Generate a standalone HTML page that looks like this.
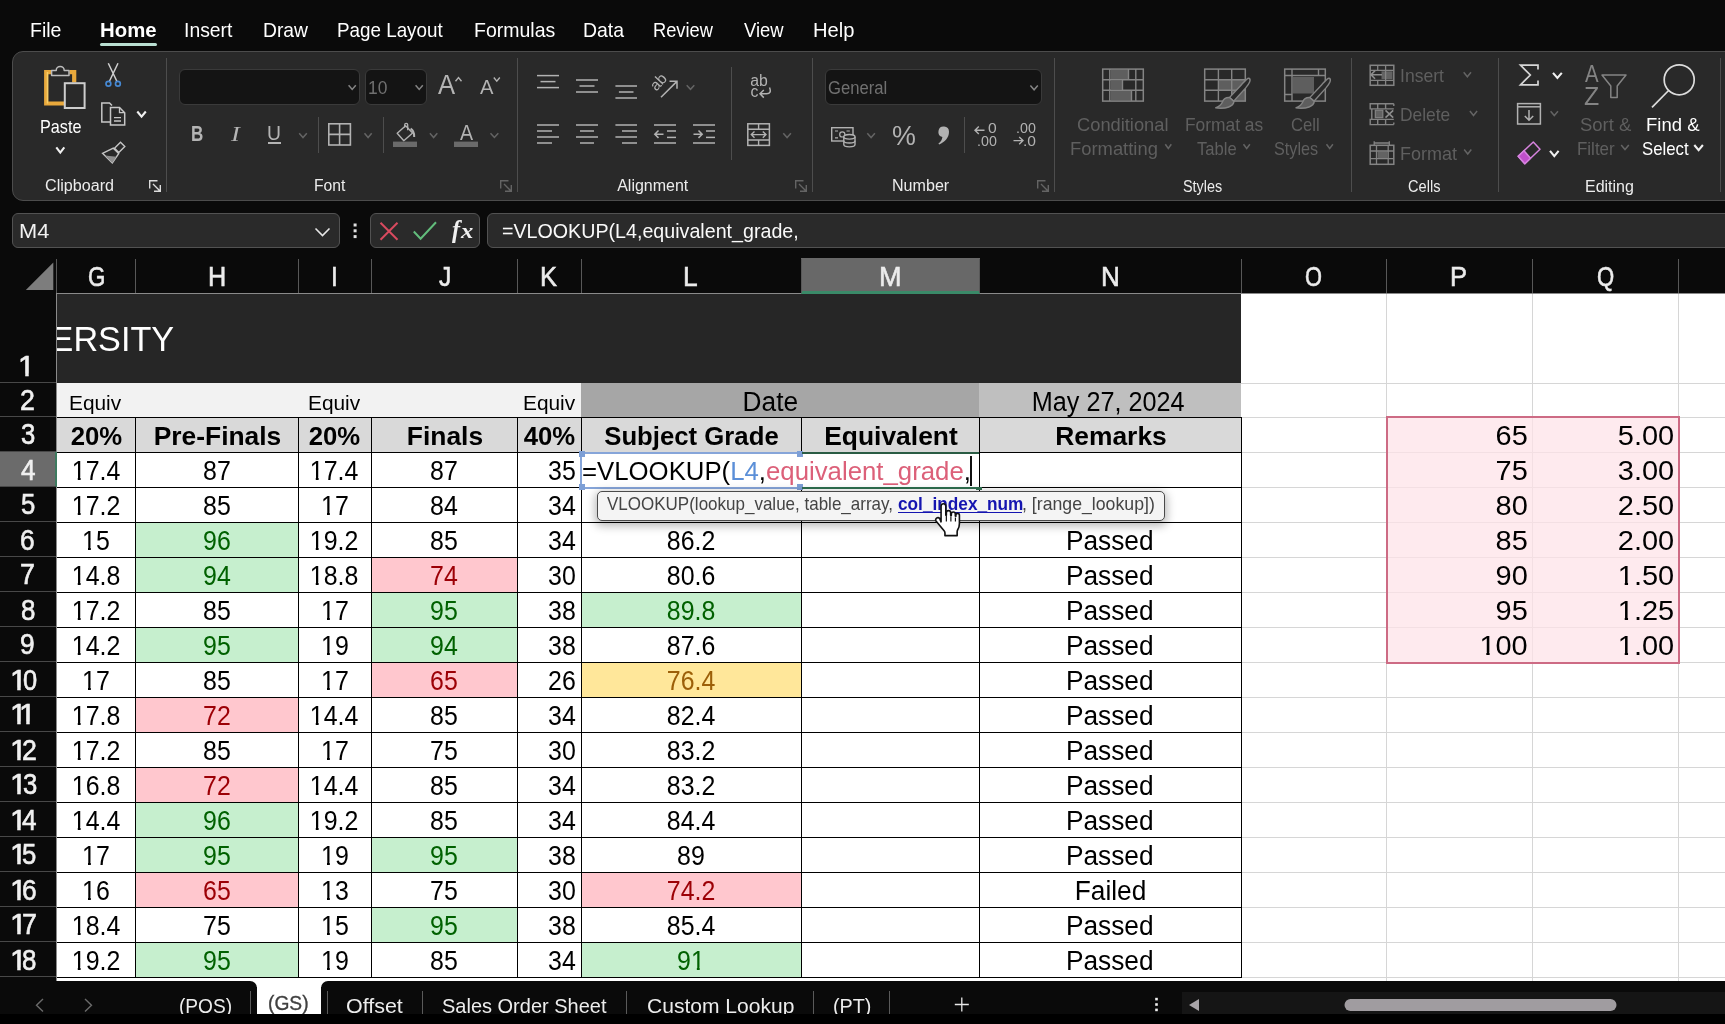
<!DOCTYPE html><html><head><meta charset="utf-8"><title>Excel</title><style>
*{margin:0;padding:0;box-sizing:border-box}
html,body{width:1725px;height:1024px;overflow:hidden;background:#0a0a0a;font-family:"Liberation Sans",sans-serif}
#root{will-change:transform;position:absolute;left:0;top:0;width:1725px;height:1024px;overflow:hidden;background:#0a0a0a}
.t{position:absolute;white-space:pre;line-height:1;transform-origin:0 0;display:block}
.a{position:absolute}
.c{position:absolute;font-size:26.8px;line-height:39.2px;height:35px;text-align:center;white-space:pre;color:#000;overflow:hidden}
.r{text-align:right}
.c span{display:inline-block}
.n{transform:scaleX(.93)}
.w{transform:scaleX(.98)}
.r .n{transform-origin:100% 50%}
.q{transform:scaleX(1.08);transform-origin:100% 50%}
.hb{font-weight:bold;font-size:26.4px}
.g{background:#c6efce;color:#006100}
.p{background:#ffc7ce;color:#9c0006}
.y{background:#ffe79a;color:#9c5f08}
.hl{position:absolute;background:#000;height:1px}
.vl{position:absolute;background:#000;width:1px}
svg{position:absolute;left:0;top:0;overflow:visible}
.o{display:inline-block;line-height:30px;clip-path:polygon(0 0,15.90px 0,15.90px 21.20px,9.46px 21.20px,9.46px 30px,6.39px 30px,6.39px 21.20px,0 21.20px)}
.o2{display:inline-block;line-height:32px;clip-path:polygon(0 0,16.91px 0,16.91px 23.06px,10.07px 23.06px,10.07px 32px,6.84px 32px,6.84px 23.06px,0 23.06px)}
</style></head><body><div id="root">
<div class="a" id="grid" style="left:0;top:258px;width:1725px;height:723px;overflow:hidden;background:#fff">
<div class="a" style="left:1241px;top:125px;width:500px;height:1px;background:#d6d6d6"></div>
<div class="a" style="left:1241px;top:159px;width:500px;height:1px;background:#d6d6d6"></div>
<div class="a" style="left:1241px;top:194px;width:500px;height:1px;background:#d6d6d6"></div>
<div class="a" style="left:1241px;top:229px;width:500px;height:1px;background:#d6d6d6"></div>
<div class="a" style="left:1241px;top:264px;width:500px;height:1px;background:#d6d6d6"></div>
<div class="a" style="left:1241px;top:299px;width:500px;height:1px;background:#d6d6d6"></div>
<div class="a" style="left:1241px;top:334px;width:500px;height:1px;background:#d6d6d6"></div>
<div class="a" style="left:1241px;top:369px;width:500px;height:1px;background:#d6d6d6"></div>
<div class="a" style="left:1241px;top:404px;width:500px;height:1px;background:#d6d6d6"></div>
<div class="a" style="left:1241px;top:439px;width:500px;height:1px;background:#d6d6d6"></div>
<div class="a" style="left:1241px;top:474px;width:500px;height:1px;background:#d6d6d6"></div>
<div class="a" style="left:1241px;top:509px;width:500px;height:1px;background:#d6d6d6"></div>
<div class="a" style="left:1241px;top:544px;width:500px;height:1px;background:#d6d6d6"></div>
<div class="a" style="left:1241px;top:579px;width:500px;height:1px;background:#d6d6d6"></div>
<div class="a" style="left:1241px;top:614px;width:500px;height:1px;background:#d6d6d6"></div>
<div class="a" style="left:1241px;top:649px;width:500px;height:1px;background:#d6d6d6"></div>
<div class="a" style="left:1241px;top:684px;width:500px;height:1px;background:#d6d6d6"></div>
<div class="a" style="left:1241px;top:719px;width:500px;height:1px;background:#d6d6d6"></div>
<div class="a" style="left:1386px;top:35px;width:1px;height:688px;background:#d6d6d6"></div>
<div class="a" style="left:1532px;top:35px;width:1px;height:688px;background:#d6d6d6"></div>
<div class="a" style="left:1678px;top:35px;width:1px;height:688px;background:#d6d6d6"></div>
<div class="a" style="left:57px;top:35px;width:1184px;height:90px;background:#262626"></div>
<div class="a" style="left:57px;top:125px;width:524px;height:34px;background:#f2f2f2"></div>
<div class="a" style="left:581px;top:125px;width:398px;height:34px;background:#a6a6a6"></div>
<div class="a" style="left:979px;top:125px;width:262px;height:34px;background:#bfbfbf"></div>
<div class="a" style="left:57px;top:159px;width:1184px;height:35px;background:#d9d9d9"></div>
<div class="a" style="left:1385.5px;top:158px;width:294.5px;height:247.5px;background:rgba(253,226,231,0.72);border:2px solid #cd6b84"></div>
<div class="c" style="left:57px;top:194px;width:78px"><span class="n"><span class="o">1</span>7.4</span></div>
<div class="c" style="left:135px;top:194px;width:163px"><span class="n">87</span></div>
<div class="c" style="left:298px;top:194px;width:73px"><span class="n"><span class="o">1</span>7.4</span></div>
<div class="c" style="left:371px;top:194px;width:146px"><span class="n">87</span></div>
<div class="c r" style="left:517px;top:194px;width:64px;padding-right:5px"><span class="n">35</span></div>
<div class="c" style="left:57px;top:229px;width:78px"><span class="n"><span class="o">1</span>7.2</span></div>
<div class="c" style="left:135px;top:229px;width:163px"><span class="n">85</span></div>
<div class="c" style="left:298px;top:229px;width:73px"><span class="n"><span class="o">1</span>7</span></div>
<div class="c" style="left:371px;top:229px;width:146px"><span class="n">84</span></div>
<div class="c r" style="left:517px;top:229px;width:64px;padding-right:5px"><span class="n">34</span></div>
<div class="c" style="left:57px;top:264px;width:78px"><span class="n"><span class="o">1</span>5</span></div>
<div class="c g" style="left:135px;top:264px;width:163px"><span class="n">96</span></div>
<div class="c" style="left:298px;top:264px;width:73px"><span class="n"><span class="o">1</span>9.2</span></div>
<div class="c" style="left:371px;top:264px;width:146px"><span class="n">85</span></div>
<div class="c r" style="left:517px;top:264px;width:64px;padding-right:5px"><span class="n">34</span></div>
<div class="c" style="left:581px;top:264px;width:220px"><span class="n">86.2</span></div>
<div class="c" style="left:979px;top:264px;width:262px"><span class="w">Passed</span></div>
<div class="c" style="left:57px;top:299px;width:78px"><span class="n"><span class="o">1</span>4.8</span></div>
<div class="c g" style="left:135px;top:299px;width:163px"><span class="n">94</span></div>
<div class="c" style="left:298px;top:299px;width:73px"><span class="n"><span class="o">1</span>8.8</span></div>
<div class="c p" style="left:371px;top:299px;width:146px"><span class="n">74</span></div>
<div class="c r" style="left:517px;top:299px;width:64px;padding-right:5px"><span class="n">30</span></div>
<div class="c" style="left:581px;top:299px;width:220px"><span class="n">80.6</span></div>
<div class="c" style="left:979px;top:299px;width:262px"><span class="w">Passed</span></div>
<div class="c" style="left:57px;top:334px;width:78px"><span class="n"><span class="o">1</span>7.2</span></div>
<div class="c" style="left:135px;top:334px;width:163px"><span class="n">85</span></div>
<div class="c" style="left:298px;top:334px;width:73px"><span class="n"><span class="o">1</span>7</span></div>
<div class="c g" style="left:371px;top:334px;width:146px"><span class="n">95</span></div>
<div class="c r" style="left:517px;top:334px;width:64px;padding-right:5px"><span class="n">38</span></div>
<div class="c g" style="left:581px;top:334px;width:220px"><span class="n">89.8</span></div>
<div class="c" style="left:979px;top:334px;width:262px"><span class="w">Passed</span></div>
<div class="c" style="left:57px;top:369px;width:78px"><span class="n"><span class="o">1</span>4.2</span></div>
<div class="c g" style="left:135px;top:369px;width:163px"><span class="n">95</span></div>
<div class="c" style="left:298px;top:369px;width:73px"><span class="n"><span class="o">1</span>9</span></div>
<div class="c g" style="left:371px;top:369px;width:146px"><span class="n">94</span></div>
<div class="c r" style="left:517px;top:369px;width:64px;padding-right:5px"><span class="n">38</span></div>
<div class="c" style="left:581px;top:369px;width:220px"><span class="n">87.6</span></div>
<div class="c" style="left:979px;top:369px;width:262px"><span class="w">Passed</span></div>
<div class="c" style="left:57px;top:404px;width:78px"><span class="n"><span class="o">1</span>7</span></div>
<div class="c" style="left:135px;top:404px;width:163px"><span class="n">85</span></div>
<div class="c" style="left:298px;top:404px;width:73px"><span class="n"><span class="o">1</span>7</span></div>
<div class="c p" style="left:371px;top:404px;width:146px"><span class="n">65</span></div>
<div class="c r" style="left:517px;top:404px;width:64px;padding-right:5px"><span class="n">26</span></div>
<div class="c y" style="left:581px;top:404px;width:220px"><span class="n">76.4</span></div>
<div class="c" style="left:979px;top:404px;width:262px"><span class="w">Passed</span></div>
<div class="c" style="left:57px;top:439px;width:78px"><span class="n"><span class="o">1</span>7.8</span></div>
<div class="c p" style="left:135px;top:439px;width:163px"><span class="n">72</span></div>
<div class="c" style="left:298px;top:439px;width:73px"><span class="n"><span class="o">1</span>4.4</span></div>
<div class="c" style="left:371px;top:439px;width:146px"><span class="n">85</span></div>
<div class="c r" style="left:517px;top:439px;width:64px;padding-right:5px"><span class="n">34</span></div>
<div class="c" style="left:581px;top:439px;width:220px"><span class="n">82.4</span></div>
<div class="c" style="left:979px;top:439px;width:262px"><span class="w">Passed</span></div>
<div class="c" style="left:57px;top:474px;width:78px"><span class="n"><span class="o">1</span>7.2</span></div>
<div class="c" style="left:135px;top:474px;width:163px"><span class="n">85</span></div>
<div class="c" style="left:298px;top:474px;width:73px"><span class="n"><span class="o">1</span>7</span></div>
<div class="c" style="left:371px;top:474px;width:146px"><span class="n">75</span></div>
<div class="c r" style="left:517px;top:474px;width:64px;padding-right:5px"><span class="n">30</span></div>
<div class="c" style="left:581px;top:474px;width:220px"><span class="n">83.2</span></div>
<div class="c" style="left:979px;top:474px;width:262px"><span class="w">Passed</span></div>
<div class="c" style="left:57px;top:509px;width:78px"><span class="n"><span class="o">1</span>6.8</span></div>
<div class="c p" style="left:135px;top:509px;width:163px"><span class="n">72</span></div>
<div class="c" style="left:298px;top:509px;width:73px"><span class="n"><span class="o">1</span>4.4</span></div>
<div class="c" style="left:371px;top:509px;width:146px"><span class="n">85</span></div>
<div class="c r" style="left:517px;top:509px;width:64px;padding-right:5px"><span class="n">34</span></div>
<div class="c" style="left:581px;top:509px;width:220px"><span class="n">83.2</span></div>
<div class="c" style="left:979px;top:509px;width:262px"><span class="w">Passed</span></div>
<div class="c" style="left:57px;top:544px;width:78px"><span class="n"><span class="o">1</span>4.4</span></div>
<div class="c g" style="left:135px;top:544px;width:163px"><span class="n">96</span></div>
<div class="c" style="left:298px;top:544px;width:73px"><span class="n"><span class="o">1</span>9.2</span></div>
<div class="c" style="left:371px;top:544px;width:146px"><span class="n">85</span></div>
<div class="c r" style="left:517px;top:544px;width:64px;padding-right:5px"><span class="n">34</span></div>
<div class="c" style="left:581px;top:544px;width:220px"><span class="n">84.4</span></div>
<div class="c" style="left:979px;top:544px;width:262px"><span class="w">Passed</span></div>
<div class="c" style="left:57px;top:579px;width:78px"><span class="n"><span class="o">1</span>7</span></div>
<div class="c g" style="left:135px;top:579px;width:163px"><span class="n">95</span></div>
<div class="c" style="left:298px;top:579px;width:73px"><span class="n"><span class="o">1</span>9</span></div>
<div class="c g" style="left:371px;top:579px;width:146px"><span class="n">95</span></div>
<div class="c r" style="left:517px;top:579px;width:64px;padding-right:5px"><span class="n">38</span></div>
<div class="c" style="left:581px;top:579px;width:220px"><span class="n">89</span></div>
<div class="c" style="left:979px;top:579px;width:262px"><span class="w">Passed</span></div>
<div class="c" style="left:57px;top:614px;width:78px"><span class="n"><span class="o">1</span>6</span></div>
<div class="c p" style="left:135px;top:614px;width:163px"><span class="n">65</span></div>
<div class="c" style="left:298px;top:614px;width:73px"><span class="n"><span class="o">1</span>3</span></div>
<div class="c" style="left:371px;top:614px;width:146px"><span class="n">75</span></div>
<div class="c r" style="left:517px;top:614px;width:64px;padding-right:5px"><span class="n">30</span></div>
<div class="c p" style="left:581px;top:614px;width:220px"><span class="n">74.2</span></div>
<div class="c" style="left:979px;top:614px;width:262px"><span class="w">Failed</span></div>
<div class="c" style="left:57px;top:649px;width:78px"><span class="n"><span class="o">1</span>8.4</span></div>
<div class="c" style="left:135px;top:649px;width:163px"><span class="n">75</span></div>
<div class="c" style="left:298px;top:649px;width:73px"><span class="n"><span class="o">1</span>5</span></div>
<div class="c g" style="left:371px;top:649px;width:146px"><span class="n">95</span></div>
<div class="c r" style="left:517px;top:649px;width:64px;padding-right:5px"><span class="n">38</span></div>
<div class="c" style="left:581px;top:649px;width:220px"><span class="n">85.4</span></div>
<div class="c" style="left:979px;top:649px;width:262px"><span class="w">Passed</span></div>
<div class="c" style="left:57px;top:684px;width:78px"><span class="n"><span class="o">1</span>9.2</span></div>
<div class="c g" style="left:135px;top:684px;width:163px"><span class="n">95</span></div>
<div class="c" style="left:298px;top:684px;width:73px"><span class="n"><span class="o">1</span>9</span></div>
<div class="c" style="left:371px;top:684px;width:146px"><span class="n">85</span></div>
<div class="c r" style="left:517px;top:684px;width:64px;padding-right:5px"><span class="n">34</span></div>
<div class="c g" style="left:581px;top:684px;width:220px"><span class="n">9<span class="o">1</span></span></div>
<div class="c" style="left:979px;top:684px;width:262px"><span class="w">Passed</span></div>
<div class="c" style="left:57px;top:159px;width:78px"><span class="hb" style="transform:scaleX(.975)">20%</span></div>
<div class="c" style="left:136px;top:159px;width:163px"><span class="hb">Pre-Finals</span></div>
<div class="c" style="left:298px;top:159px;width:73px"><span class="hb" style="transform:scaleX(.975)">20%</span></div>
<div class="c" style="left:372px;top:159px;width:146px"><span class="hb">Finals</span></div>
<div class="c" style="left:517px;top:159px;width:64px"><span class="hb" style="transform:scaleX(.975)">40%</span></div>
<div class="c" style="left:581px;top:159px;width:220px"><span class="hb" style="transform:scaleX(.975)">Subject Grade</span></div>
<div class="c" style="left:802px;top:159px;width:178px"><span class="hb">Equivalent</span></div>
<div class="c" style="left:980px;top:159px;width:262px"><span class="hb">Remarks</span></div>
<div class="c" style="left:571px;top:125px;width:398px;height:34px;line-height:38.2px"><span class="w">Date</span></div>
<div class="c" style="left:977.5px;top:125px;width:262px;height:34px;line-height:38.2px"><span style="transform:scaleX(.94)">May 27, 2024</span></div>
<span class="t" style="left:69.19px;top:133px;font-size:21px;line-height:23px;color:#000;transform:scaleX(0.9934);">Equiv</span>
<span class="t" style="left:308.19px;top:133px;font-size:21px;line-height:23px;color:#000;transform:scaleX(0.9934);">Equiv</span>
<span class="t" style="left:522.79px;top:133px;font-size:21px;line-height:23px;color:#000;transform:scaleX(0.9934);">Equiv</span>
<div class="a" style="left:57px;top:35px;width:400px;height:90px;overflow:hidden"><span class="t" style="left:-6.40px;top:27px;font-size:34.2px;line-height:38px;color:#fff;">ERSITY</span></div>
<div class="c r" style="left:1386px;top:159px;width:146px;padding-right:4px"><span class="q">65</span></div>
<div class="c r" style="left:1532px;top:159px;width:146px;padding-right:4px"><span class="q">5.00</span></div>
<div class="c r" style="left:1386px;top:194px;width:146px;padding-right:4px"><span class="q">75</span></div>
<div class="c r" style="left:1532px;top:194px;width:146px;padding-right:4px"><span class="q">3.00</span></div>
<div class="c r" style="left:1386px;top:229px;width:146px;padding-right:4px"><span class="q">80</span></div>
<div class="c r" style="left:1532px;top:229px;width:146px;padding-right:4px"><span class="q">2.50</span></div>
<div class="c r" style="left:1386px;top:264px;width:146px;padding-right:4px"><span class="q">85</span></div>
<div class="c r" style="left:1532px;top:264px;width:146px;padding-right:4px"><span class="q">2.00</span></div>
<div class="c r" style="left:1386px;top:299px;width:146px;padding-right:4px"><span class="q">90</span></div>
<div class="c r" style="left:1532px;top:299px;width:146px;padding-right:4px"><span class="q"><span class="o">1</span>.50</span></div>
<div class="c r" style="left:1386px;top:334px;width:146px;padding-right:4px"><span class="q">95</span></div>
<div class="c r" style="left:1532px;top:334px;width:146px;padding-right:4px"><span class="q"><span class="o">1</span>.25</span></div>
<div class="c r" style="left:1386px;top:369px;width:146px;padding-right:4px"><span class="q"><span class="o">1</span>00</span></div>
<div class="c r" style="left:1532px;top:369px;width:146px;padding-right:4px"><span class="q"><span class="o">1</span>.00</span></div>
<div class="hl" style="left:57px;top:159px;width:1185px"></div>
<div class="hl" style="left:57px;top:194px;width:1185px"></div>
<div class="hl" style="left:57px;top:229px;width:1185px"></div>
<div class="hl" style="left:57px;top:264px;width:1185px"></div>
<div class="hl" style="left:57px;top:299px;width:1185px"></div>
<div class="hl" style="left:57px;top:334px;width:1185px"></div>
<div class="hl" style="left:57px;top:369px;width:1185px"></div>
<div class="hl" style="left:57px;top:404px;width:1185px"></div>
<div class="hl" style="left:57px;top:439px;width:1185px"></div>
<div class="hl" style="left:57px;top:474px;width:1185px"></div>
<div class="hl" style="left:57px;top:509px;width:1185px"></div>
<div class="hl" style="left:57px;top:544px;width:1185px"></div>
<div class="hl" style="left:57px;top:579px;width:1185px"></div>
<div class="hl" style="left:57px;top:614px;width:1185px"></div>
<div class="hl" style="left:57px;top:649px;width:1185px"></div>
<div class="hl" style="left:57px;top:684px;width:1185px"></div>
<div class="hl" style="left:57px;top:719px;width:1185px"></div>
<div class="vl" style="left:135px;top:159px;height:561px"></div>
<div class="vl" style="left:298px;top:159px;height:561px"></div>
<div class="vl" style="left:371px;top:159px;height:561px"></div>
<div class="vl" style="left:517px;top:159px;height:561px"></div>
<div class="vl" style="left:581px;top:159px;height:561px"></div>
<div class="vl" style="left:801px;top:159px;height:561px"></div>
<div class="vl" style="left:979px;top:159px;height:561px"></div>
<div class="vl" style="left:1241px;top:159px;height:561px"></div>
<div class="a" style="left:581px;top:194px;width:398px;height:35px;background:#fff"></div>
<span class="t" style="left:581.76px;top:198px;line-height:30px;font-size:26px;transform:scaleX(0.9909)"><span style="color:#000">=VLOOKUP(</span><span style="color:#5b8fd8">L4</span><span style="color:#000">,</span><span style="color:#dc6079">equivalent_grade</span><span style="color:#000">,</span></span>
<div class="a" style="left:970px;top:197.5px;width:1.5px;height:30px;background:#111"></div>
<div class="a" style="left:580px;top:193.5px;width:222px;height:37.5px;border:2px solid #86a5d9;border-right:none"></div>
<div class="a" style="left:579px;top:192.5px;width:6px;height:6px;background:#7d9fd6"></div>
<div class="a" style="left:797px;top:192.5px;width:6px;height:6px;background:#7d9fd6"></div>
<div class="a" style="left:579px;top:226px;width:6px;height:6px;background:#7d9fd6"></div>
<div class="a" style="left:797px;top:226px;width:6px;height:6px;background:#7d9fd6"></div>
<div class="a" style="left:802px;top:194px;width:177px;height:1.5px;background:#2a5c44"></div>
<div class="a" style="left:802px;top:229px;width:177px;height:2px;background:#2f6f4f"></div>
<div class="a" style="left:976px;top:228.5px;width:6px;height:3.5px;background:#2f6f4f"></div>
<div class="a" style="left:0;top:0;width:1725px;height:35px;background:#0a0a0a"></div>
<div class="a" style="left:801px;top:0;width:179px;height:36px;background:#686868"></div>
<div class="a" style="left:0;top:35px;width:1725px;height:1px;background:#8a8a8a"></div>
<div class="a" style="left:801px;top:33px;width:179px;height:3px;background:#3a8a68"></div>
<div class="a" style="left:56px;top:1px;width:1px;height:34px;background:#585858"></div>
<div class="a" style="left:135px;top:1px;width:1px;height:34px;background:#585858"></div>
<div class="a" style="left:298px;top:1px;width:1px;height:34px;background:#585858"></div>
<div class="a" style="left:371px;top:1px;width:1px;height:34px;background:#585858"></div>
<div class="a" style="left:517px;top:1px;width:1px;height:34px;background:#585858"></div>
<div class="a" style="left:581px;top:1px;width:1px;height:34px;background:#585858"></div>
<div class="a" style="left:801px;top:1px;width:1px;height:34px;background:#585858"></div>
<div class="a" style="left:979px;top:1px;width:1px;height:34px;background:#585858"></div>
<div class="a" style="left:1241px;top:1px;width:1px;height:34px;background:#585858"></div>
<div class="a" style="left:1386px;top:1px;width:1px;height:34px;background:#585858"></div>
<div class="a" style="left:1532px;top:1px;width:1px;height:34px;background:#585858"></div>
<div class="a" style="left:1678px;top:1px;width:1px;height:34px;background:#585858"></div>
<span class="t" style="left:87.88px;top:2px;font-size:28.3px;line-height:32px;color:#ececec;transform:scaleX(0.7888);-webkit-text-stroke:0.6px #ececec;">G</span>
<span class="t" style="left:207.68px;top:2px;font-size:28.3px;line-height:32px;color:#ececec;transform:scaleX(0.8913);-webkit-text-stroke:0.6px #ececec;">H</span>
<span class="t" style="left:331.40px;top:2px;font-size:28.3px;line-height:32px;color:#ececec;transform:scaleX(0.8646);-webkit-text-stroke:0.6px #ececec;">I</span>
<span class="t" style="left:438.88px;top:2px;font-size:28.3px;line-height:32px;color:#ececec;transform:scaleX(0.8683);-webkit-text-stroke:0.6px #ececec;">J</span>
<span class="t" style="left:539.91px;top:2px;font-size:28.3px;line-height:32px;color:#ececec;transform:scaleX(0.8988);-webkit-text-stroke:0.6px #ececec;">K</span>
<span class="t" style="left:683.34px;top:2px;font-size:28.3px;line-height:32px;color:#ececec;transform:scaleX(0.9295);-webkit-text-stroke:0.6px #ececec;">L</span>
<span class="t" style="left:879.03px;top:2px;font-size:28.3px;line-height:32px;color:#ececec;transform:scaleX(0.9560);-webkit-text-stroke:0.6px #ececec;">M</span>
<span class="t" style="left:1100.86px;top:2px;font-size:28.3px;line-height:32px;color:#ececec;transform:scaleX(0.9229);-webkit-text-stroke:0.6px #ececec;">N</span>
<span class="t" style="left:1305.32px;top:2px;font-size:28.3px;line-height:32px;color:#ececec;transform:scaleX(0.7709);-webkit-text-stroke:0.6px #ececec;">O</span>
<span class="t" style="left:1450.41px;top:2px;font-size:28.3px;line-height:32px;color:#ececec;transform:scaleX(0.9016);-webkit-text-stroke:0.6px #ececec;">P</span>
<span class="t" style="left:1596.71px;top:2px;font-size:28.3px;line-height:32px;color:#ececec;transform:scaleX(0.7812);-webkit-text-stroke:0.6px #ececec;">Q</span>
<svg width="57" height="35"><path d="M53.300 4.500V32H25.800Z" fill="#7d7d7d"/></svg>
<div class="a" style="left:0;top:35px;width:57px;height:688px;background:#0a0a0a"></div>
<div class="a" style="left:0;top:194px;width:57px;height:35px;background:#6b6b6b;border-right:2px solid #3d7a5f"></div>
<div class="a" style="left:56px;top:35px;width:1px;height:159px;background:#8a8a8a"></div>
<div class="a" style="left:56px;top:229px;width:1px;height:494px;background:#8a8a8a"></div>
<div class="a" style="left:0;top:124px;width:56px;height:1px;background:#484848"></div>
<span class="t" style="left:17.98px;top:92px;font-size:28.6px;line-height:32px;color:#f0f0f0;transform:scaleX(1.0619);-webkit-text-stroke:0.6px #f0f0f0;"><span class="o2">1</span></span>
<div class="a" style="left:0;top:158px;width:56px;height:1px;background:#484848"></div>
<span class="t" style="left:20.36px;top:126px;font-size:28.6px;line-height:32px;color:#f0f0f0;transform:scaleX(0.9355);-webkit-text-stroke:0.6px #f0f0f0;">2</span>
<div class="a" style="left:0;top:193px;width:56px;height:1px;background:#484848"></div>
<span class="t" style="left:20.72px;top:160px;font-size:28.6px;line-height:32px;color:#f0f0f0;transform:scaleX(0.8980);-webkit-text-stroke:0.6px #f0f0f0;">3</span>
<div class="a" style="left:0;top:228px;width:56px;height:1px;background:#484848"></div>
<span class="t" style="left:21.22px;top:196px;font-size:28.6px;line-height:32px;color:#f0f0f0;transform:scaleX(0.9139);-webkit-text-stroke:0.6px #f0f0f0;">4</span>
<div class="a" style="left:0;top:263px;width:56px;height:1px;background:#484848"></div>
<span class="t" style="left:20.67px;top:230px;font-size:28.6px;line-height:32px;color:#f0f0f0;transform:scaleX(0.8980);-webkit-text-stroke:0.6px #f0f0f0;">5</span>
<div class="a" style="left:0;top:298px;width:56px;height:1px;background:#484848"></div>
<span class="t" style="left:20.38px;top:266px;font-size:28.6px;line-height:32px;color:#f0f0f0;transform:scaleX(0.9213);-webkit-text-stroke:0.6px #f0f0f0;">6</span>
<div class="a" style="left:0;top:333px;width:56px;height:1px;background:#484848"></div>
<span class="t" style="left:20.33px;top:300px;font-size:28.6px;line-height:32px;color:#f0f0f0;transform:scaleX(0.9375);-webkit-text-stroke:0.6px #f0f0f0;">7</span>
<div class="a" style="left:0;top:368px;width:56px;height:1px;background:#484848"></div>
<span class="t" style="left:20.58px;top:336px;font-size:28.6px;line-height:32px;color:#f0f0f0;transform:scaleX(0.9076);-webkit-text-stroke:0.6px #f0f0f0;">8</span>
<div class="a" style="left:0;top:403px;width:56px;height:1px;background:#484848"></div>
<span class="t" style="left:20.49px;top:370px;font-size:28.6px;line-height:32px;color:#f0f0f0;transform:scaleX(0.9213);-webkit-text-stroke:0.6px #f0f0f0;">9</span>
<div class="a" style="left:0;top:438px;width:56px;height:1px;background:#484848"></div>
<span class="t" style="left:10.08px;top:406px;font-size:28.6px;line-height:32px;color:#f0f0f0;transform:scaleX(1.0619);-webkit-text-stroke:0.6px #f0f0f0;"><span class="o2">1</span></span>
<span class="t" style="left:22.51px;top:406px;font-size:28.6px;line-height:32px;color:#f0f0f0;transform:scaleX(0.8905);-webkit-text-stroke:0.6px #f0f0f0;">0</span>
<div class="a" style="left:0;top:473px;width:56px;height:1px;background:#484848"></div>
<span class="t" style="left:10.08px;top:440px;font-size:28.6px;line-height:32px;color:#f0f0f0;transform:scaleX(1.0619);-webkit-text-stroke:0.6px #f0f0f0;"><span class="o2">1</span></span>
<span class="t" style="left:19.38px;top:440px;font-size:28.6px;line-height:32px;color:#f0f0f0;transform:scaleX(1.0619);-webkit-text-stroke:0.6px #f0f0f0;"><span class="o2">1</span></span>
<div class="a" style="left:0;top:508px;width:56px;height:1px;background:#484848"></div>
<span class="t" style="left:10.08px;top:476px;font-size:28.6px;line-height:32px;color:#f0f0f0;transform:scaleX(1.0619);-webkit-text-stroke:0.6px #f0f0f0;"><span class="o2">1</span></span>
<span class="t" style="left:22.16px;top:476px;font-size:28.6px;line-height:32px;color:#f0f0f0;transform:scaleX(0.9355);-webkit-text-stroke:0.6px #f0f0f0;">2</span>
<div class="a" style="left:0;top:543px;width:56px;height:1px;background:#484848"></div>
<span class="t" style="left:10.08px;top:510px;font-size:28.6px;line-height:32px;color:#f0f0f0;transform:scaleX(1.0619);-webkit-text-stroke:0.6px #f0f0f0;"><span class="o2">1</span></span>
<span class="t" style="left:22.52px;top:510px;font-size:28.6px;line-height:32px;color:#f0f0f0;transform:scaleX(0.8980);-webkit-text-stroke:0.6px #f0f0f0;">3</span>
<div class="a" style="left:0;top:578px;width:56px;height:1px;background:#484848"></div>
<span class="t" style="left:10.08px;top:546px;font-size:28.6px;line-height:32px;color:#f0f0f0;transform:scaleX(1.0619);-webkit-text-stroke:0.6px #f0f0f0;"><span class="o2">1</span></span>
<span class="t" style="left:21.82px;top:546px;font-size:28.6px;line-height:32px;color:#f0f0f0;transform:scaleX(0.9139);-webkit-text-stroke:0.6px #f0f0f0;">4</span>
<div class="a" style="left:0;top:613px;width:56px;height:1px;background:#484848"></div>
<span class="t" style="left:10.08px;top:580px;font-size:28.6px;line-height:32px;color:#f0f0f0;transform:scaleX(1.0619);-webkit-text-stroke:0.6px #f0f0f0;"><span class="o2">1</span></span>
<span class="t" style="left:22.47px;top:580px;font-size:28.6px;line-height:32px;color:#f0f0f0;transform:scaleX(0.8980);-webkit-text-stroke:0.6px #f0f0f0;">5</span>
<div class="a" style="left:0;top:648px;width:56px;height:1px;background:#484848"></div>
<span class="t" style="left:10.08px;top:616px;font-size:28.6px;line-height:32px;color:#f0f0f0;transform:scaleX(1.0619);-webkit-text-stroke:0.6px #f0f0f0;"><span class="o2">1</span></span>
<span class="t" style="left:22.18px;top:616px;font-size:28.6px;line-height:32px;color:#f0f0f0;transform:scaleX(0.9213);-webkit-text-stroke:0.6px #f0f0f0;">6</span>
<div class="a" style="left:0;top:683px;width:56px;height:1px;background:#484848"></div>
<span class="t" style="left:10.08px;top:650px;font-size:28.6px;line-height:32px;color:#f0f0f0;transform:scaleX(1.0619);-webkit-text-stroke:0.6px #f0f0f0;"><span class="o2">1</span></span>
<span class="t" style="left:22.13px;top:650px;font-size:28.6px;line-height:32px;color:#f0f0f0;transform:scaleX(0.9375);-webkit-text-stroke:0.6px #f0f0f0;">7</span>
<div class="a" style="left:0;top:718px;width:56px;height:1px;background:#484848"></div>
<span class="t" style="left:10.08px;top:686px;font-size:28.6px;line-height:32px;color:#f0f0f0;transform:scaleX(1.0619);-webkit-text-stroke:0.6px #f0f0f0;"><span class="o2">1</span></span>
<span class="t" style="left:22.38px;top:686px;font-size:28.6px;line-height:32px;color:#f0f0f0;transform:scaleX(0.9076);-webkit-text-stroke:0.6px #f0f0f0;">8</span>
</div>
<div class="a" style="left:597px;top:490.5px;width:568px;height:30.5px;background:#f4f4f4;border:1.5px solid #4a4a4a;border-radius:5px;box-shadow:0 3px 10px 2px rgba(0,0,0,.28)"></div>
<span class="t" style="left:607.33px;top:494px;font-size:18.2px;line-height:20px;color:#444;transform:scaleX(0.9347);">VLOOKUP(lookup_value, table_array,</span>
<span class="t" style="left:897.53px;top:494px;font-size:18.2px;line-height:20px;color:#1515b0;font-weight:bold;transform:scaleX(0.9474);">col_index_num</span>
<div class="a" style="left:898px;top:512px;width:124px;height:1.3px;background:#1515b0"></div>
<span class="t" style="left:1021.92px;top:494px;font-size:18.2px;line-height:20px;color:#444;transform:scaleX(0.9728);">, [range_lookup])</span>
<svg width="1725" height="1024" style="pointer-events:none"><g transform="translate(933.5,502.5) scale(1.08)"><path d="M9.2 1.2c1.3 0 2.2 1 2.2 2.3v8.3l.5-.1V9.6c0-1.2.9-2.1 2-2.1s2 .9 2 2.1v2.3l.6.1v-1.3c0-1.1.8-1.9 1.8-1.9s1.9.8 1.9 1.9v1.8l.5.2v-.9c0-1 .7-1.7 1.6-1.7s1.7.7 1.7 1.7v7.6c0 2.2-.6 4.2-1.6 5.8-.3.5-.5 1.2-.5 1.9v3.6H10.6v-2.5c0-.8-.3-1.5-.8-2.1l-7.3-8.7c-.8-.9-.6-2.2.3-2.9.9-.7 2.100-.6 2.9.2L7 17.900V3.500c0-1.300.9-2.300 2.200-2.300z" fill="#fff" stroke="#111" stroke-width="1.5" stroke-linejoin="round"/><path d="M11.9 12.500v5M16.100 12.800v4.700M20.300 13.800v3.700" stroke="#111" stroke-width="1.1" fill="none"/></g></svg>
<div class="a" style="left:12px;top:213px;width:328px;height:35px;background:#2a2a2a;border:1px solid #525252;border-radius:6px"></div>
<span class="t" style="left:19.01px;top:220px;font-size:19.8px;line-height:22px;color:#f2f2f2;transform:scaleX(1.1026);">M4</span>
<svg width="1725" height="260"><path d="M315.5 228.5l7 7 7-7" stroke="#e6e6e6" stroke-width="1.6" fill="none"/><g fill="#e0e0e0"><rect x="353.600" y="223.500" width="3" height="3"/><rect x="353.600" y="229.300" width="3" height="3"/><rect x="353.600" y="235.100" width="3" height="3"/></g></svg>
<div class="a" style="left:370px;top:213px;width:110px;height:35px;background:#2a2a2a;border:1px solid #525252;border-radius:6px"></div>
<svg width="1725" height="260"><path d="M380.500 222.800l17 17M397.500 222.800l-17 17" stroke="#d94a5f" stroke-width="2" fill="none"/><path d="M413.800 231.500l6.800 7.200L436 222.300" stroke="#62bd7c" stroke-width="2" fill="none"/></svg>
<span class="t" style="left:452.00px;top:215px;font-size:26px;line-height:29px;color:#f0f0f0;font-family:'Liberation Serif',serif;font-weight:bold;font-style:italic;transform:scaleX(0.9246);">f</span>
<span class="t" style="left:460.82px;top:219px;font-size:21px;line-height:24px;color:#f0f0f0;font-family:'Liberation Serif',serif;font-weight:bold;font-style:italic;transform:scaleX(1.1686);">x</span>
<div class="a" style="left:486.500px;top:213px;width:1300px;height:35px;background:#2a2a2a;border:1px solid #525252;border-radius:6px"></div>
<span class="t" style="left:502.26px;top:220px;font-size:20.2px;line-height:22px;color:#fafafa;transform:scaleX(0.9739);">=VLOOKUP(L4,equivalent_grade,</span>
<div class="a" style="left:0;top:981px;width:1725px;height:33px;background:#0a0a0a"></div>
<div class="a" style="left:57px;top:978px;width:200px;height:9px;background:#fff"></div>
<div class="a" style="left:321px;top:978px;width:30px;height:9px;background:#fff"></div>
<div class="a" style="left:0;top:981px;width:257px;height:33px;background:#0a0a0a;border-top-right-radius:7px"></div>
<div class="a" style="left:321px;top:981px;width:1404px;height:33px;background:#0a0a0a;border-top-left-radius:7px"></div>
<div class="a" style="left:257px;top:978px;width:64px;height:36px;background:#fff"></div>
<div class="a" style="left:1182px;top:992px;width:543px;height:22px;background:#151515"></div>
<div class="a" style="left:0;top:977px;width:1725px;height:37px;overflow:hidden">
<span class="t" style="left:179.12px;top:17px;font-size:20.6px;line-height:23px;color:#ededed;transform:scaleX(0.9273);">(POS)</span>
<span class="t" style="left:346.19px;top:17px;font-size:20.6px;line-height:23px;color:#ededed;transform:scaleX(1.0416);">Offset</span>
<span class="t" style="left:442.10px;top:17px;font-size:20.6px;line-height:23px;color:#ededed;transform:scaleX(0.9709);">Sales Order Sheet</span>
<span class="t" style="left:646.95px;top:17px;font-size:20.6px;line-height:23px;color:#ededed;transform:scaleX(1.0217);">Custom Lookup</span>
<span class="t" style="left:832.77px;top:17px;font-size:20.6px;line-height:23px;color:#ededed;transform:scaleX(0.9602);">(PT)</span>
<span class="t" style="left:268.41px;top:14px;font-size:20.6px;line-height:23px;color:#404040;transform:scaleX(0.9333);-webkit-text-stroke:0.35px #404040;">(GS)</span>
<div class="a" style="left:250.2px;top:14px;width:1px;height:24px;background:#5a5a5a"></div>
<div class="a" style="left:327.0px;top:14px;width:1px;height:24px;background:#5a5a5a"></div>
<div class="a" style="left:422.0px;top:14px;width:1px;height:24px;background:#5a5a5a"></div>
<div class="a" style="left:626.0px;top:14px;width:1px;height:24px;background:#5a5a5a"></div>
<div class="a" style="left:813.0px;top:14px;width:1px;height:24px;background:#5a5a5a"></div>
<div class="a" style="left:888.5px;top:14px;width:1px;height:24px;background:#5a5a5a"></div>
</div>
<svg width="1725" height="1024"><path d="M43 999l-6.500 6.300 6.500 6.300M85 999l6.500 6.300-6.500 6.300" stroke="#6a6a6a" stroke-width="1.400" fill="none"/><path d="M961.800 997.500v14M954.800 1004.500h14" stroke="#e8e8e8" stroke-width="1.300" fill="none"/><g fill="#f0f0f0"><rect x="1155.200" y="997.800" width="2.600" height="2.600"/><rect x="1155.200" y="1003.200" width="2.600" height="2.600"/><rect x="1155.200" y="1008.600" width="2.600" height="2.600"/></g><path d="M1199 999v12l-10-6z" fill="#a8a4a8"/><rect x="1344.500" y="999" width="272" height="12" rx="6" fill="#a09ca0"/></svg>
<div class="a" style="left:0;top:1014px;width:1725px;height:10px;background:#000"></div>
<span class="t" style="left:30.40px;top:18px;font-size:21px;line-height:23px;color:#fff;transform:scaleX(0.9299);">File</span>
<span class="t" style="left:99.66px;top:18px;font-size:21px;line-height:23px;color:#fff;font-weight:bold;transform:scaleX(0.9691);">Home</span>
<span class="t" style="left:184.22px;top:18px;font-size:21px;line-height:23px;color:#fff;transform:scaleX(0.9219);">Insert</span>
<span class="t" style="left:262.92px;top:18px;font-size:21px;line-height:23px;color:#fff;transform:scaleX(0.9190);">Draw</span>
<span class="t" style="left:337.46px;top:18px;font-size:21px;line-height:23px;color:#fff;transform:scaleX(0.8960);">Page Layout</span>
<span class="t" style="left:474.40px;top:18px;font-size:21px;line-height:23px;color:#fff;transform:scaleX(0.9289);">Formulas</span>
<span class="t" style="left:583.41px;top:18px;font-size:21px;line-height:23px;color:#fff;transform:scaleX(0.9261);">Data</span>
<span class="t" style="left:652.50px;top:18px;font-size:21px;line-height:23px;color:#fff;transform:scaleX(0.8705);">Review</span>
<span class="t" style="left:743.93px;top:18px;font-size:21px;line-height:23px;color:#fff;transform:scaleX(0.8757);">View</span>
<span class="t" style="left:813.35px;top:18px;font-size:21px;line-height:23px;color:#fff;transform:scaleX(0.9603);">Help</span>
<div class="a" style="left:100px;top:42.800px;width:57px;height:3px;border-radius:2px;background:#b9dfd2"></div>
<div class="a" style="left:12px;top:51px;width:1740px;height:150px;background:#292929;border:1px solid #4c4c4c;border-radius:11px"></div>
<div class="a" style="left:166.1px;top:58px;width:1px;height:134px;background:#4d4d4d"></div>
<div class="a" style="left:516.9px;top:58px;width:1px;height:134px;background:#4d4d4d"></div>
<div class="a" style="left:812.0px;top:58px;width:1px;height:134px;background:#4d4d4d"></div>
<div class="a" style="left:1053.9px;top:58px;width:1px;height:134px;background:#4d4d4d"></div>
<div class="a" style="left:1351.0px;top:58px;width:1px;height:134px;background:#4d4d4d"></div>
<div class="a" style="left:1498.0px;top:58px;width:1px;height:134px;background:#4d4d4d"></div>
<div class="a" style="left:1719.5px;top:58px;width:1px;height:134px;background:#4d4d4d"></div>
<div class="a" style="left:317.9px;top:117px;width:1px;height:36px;background:#4d4d4d"></div>
<div class="a" style="left:383.1px;top:117px;width:1px;height:36px;background:#4d4d4d"></div>
<div class="a" style="left:730.9px;top:67px;width:1px;height:93px;background:#4d4d4d"></div>
<div class="a" style="left:963.9px;top:117px;width:1px;height:36px;background:#4d4d4d"></div>
<div class="a" style="left:179px;top:69px;width:181px;height:35.500px;background:#141414;border:1px solid #3a3a3a;border-radius:6px"></div>
<div class="a" style="left:365px;top:69px;width:62.39999999999998px;height:35.500px;background:#141414;border:1px solid #3a3a3a;border-radius:6px"></div>
<div class="a" style="left:825px;top:69px;width:217.4000000000001px;height:35.500px;background:#141414;border:1px solid #3a3a3a;border-radius:6px"></div>
<span class="t" style="left:44.99px;top:177px;font-size:16px;line-height:17px;color:#ececec;transform:scaleX(1.0082);">Clipboard</span>
<span class="t" style="left:314.11px;top:177px;font-size:16px;line-height:17px;color:#ececec;transform:scaleX(0.9806);">Font</span>
<span class="t" style="left:617.17px;top:177px;font-size:16px;line-height:17px;color:#ececec;">Alignment</span>
<span class="t" style="left:892.08px;top:177px;font-size:16px;line-height:17px;color:#ececec;transform:scaleX(1.0046);">Number</span>
<span class="t" style="left:1182.75px;top:178px;font-size:16px;line-height:17px;color:#ececec;transform:scaleX(0.8989);">Styles</span>
<span class="t" style="left:1408.47px;top:178px;font-size:16px;line-height:17px;color:#ececec;transform:scaleX(0.9125);">Cells</span>
<span class="t" style="left:1584.98px;top:178px;font-size:16px;line-height:17px;color:#ececec;">Editing</span>
<span class="t" style="left:40.27px;top:116px;font-size:18.6px;line-height:21px;color:#fff;transform:scaleX(0.8714);">Paste</span>
<span class="t" style="left:367.67px;top:77px;font-size:18.3px;line-height:21px;color:#707070;transform:scaleX(0.9527);">10</span>
<span class="t" style="left:827.77px;top:77px;font-size:18.3px;line-height:21px;color:#707070;transform:scaleX(0.9115);">General</span>
<span class="t" style="left:1077.29px;top:114px;font-size:18.6px;line-height:21px;color:#5f5f5f;transform:scaleX(0.9835);">Conditional</span>
<span class="t" style="left:1070.29px;top:138px;font-size:18.6px;line-height:21px;color:#5f5f5f;transform:scaleX(0.9887);">Formatting</span>
<span class="t" style="left:1185.37px;top:114px;font-size:18.6px;line-height:21px;color:#5f5f5f;transform:scaleX(0.9347);">Format as</span>
<span class="t" style="left:1197.03px;top:138px;font-size:18.6px;line-height:21px;color:#5f5f5f;transform:scaleX(0.8930);">Table</span>
<span class="t" style="left:1291.37px;top:114px;font-size:18.6px;line-height:21px;color:#5f5f5f;transform:scaleX(0.8966);">Cell</span>
<span class="t" style="left:1274.47px;top:138px;font-size:18.6px;line-height:21px;color:#5f5f5f;transform:scaleX(0.8710);">Styles</span>
<span class="t" style="left:1399.88px;top:65px;font-size:18.6px;line-height:21px;color:#5f5f5f;transform:scaleX(0.9446);">Insert</span>
<span class="t" style="left:1400.07px;top:104px;font-size:18.6px;line-height:21px;color:#5f5f5f;transform:scaleX(0.9356);">Delete</span>
<span class="t" style="left:1400.02px;top:143px;font-size:18.6px;line-height:21px;color:#5f5f5f;transform:scaleX(0.9677);">Format</span>
<span class="t" style="left:1579.57px;top:114px;font-size:18.6px;line-height:21px;color:#5f5f5f;transform:scaleX(0.9946);">Sort &amp;</span>
<span class="t" style="left:1577.41px;top:138px;font-size:18.6px;line-height:21px;color:#5f5f5f;transform:scaleX(0.9112);">Filter</span>
<span class="t" style="left:1646.38px;top:114px;font-size:18.6px;line-height:21px;color:#fff;transform:scaleX(0.9952);">Find &amp;</span>
<span class="t" style="left:1641.64px;top:138px;font-size:18.6px;line-height:21px;color:#fff;transform:scaleX(0.9030);">Select</span>
<span class="t" style="left:191.48px;top:122px;font-size:21.5px;line-height:24px;color:#b4b4b4;font-weight:bold;transform:scaleX(0.7917);">B</span>
<span class="t" style="left:231.11px;top:121px;font-size:22px;line-height:25px;color:#b4b4b4;font-family:'Liberation Serif',serif;font-style:italic;transform:scaleX(1.2057);">I</span>
<span class="t" style="left:267.01px;top:121px;font-size:21px;line-height:23px;color:#b4b4b4;transform:scaleX(0.9206);">U</span>
<div class="a" style="left:268px;top:142.400px;width:12.500px;height:1.600px;background:#b4b4b4"></div>
<span class="t" style="left:437.95px;top:69px;font-size:27.5px;line-height:31px;color:#b4b4b4;transform:scaleX(0.9324);">A</span>
<span class="t" style="left:479.56px;top:76px;font-size:20.3px;line-height:22px;color:#b4b4b4;transform:scaleX(0.9956);">A</span>
<svg width="1725" height="210"><path d="M65 103.500H46.200V72.200H52M69.500 72.200H74.200V82.500" stroke="#e9a93c" stroke-width="4.200" fill="none"/><path d="M47.500 72v31.500" stroke="#f6cf6a" stroke-width="1.500" fill="none"/><path d="M51.600 70.400H56.200a4 4 0 0 1 8 0H69V75.600H51.600Z" stroke="#bcbcbc" stroke-width="1.500" fill="#292929" stroke-linejoin="round"/><rect x="64.800" y="83.200" width="19.800" height="24.800" stroke="#cdcdcd" stroke-width="2" fill="#292929"/><path d="M56.3 147.3L60.30 152.6L64.3 147.3" stroke="#f0f0f0" stroke-width="2.1" fill="none"/><path d="M108.300 63.200L117 81.500M118 63.200L109.300 81.500" stroke="#cfcfcf" stroke-width="1.500" fill="none"/><circle cx="108.400" cy="83.800" r="2.400" stroke="#4688d2" stroke-width="1.700" fill="none"/><circle cx="117.900" cy="83.800" r="2.400" stroke="#4688d2" stroke-width="1.700" fill="none"/><path d="M110 122H101.800V103H109.500L112 105.500" stroke="#c6c6c6" stroke-width="1.500" fill="none"/><path d="M110.500 107.500H119.500L124.700 112.700V125H110.500Z" stroke="#c6c6c6" stroke-width="1.500" fill="#292929"/><path d="M119.500 107.500V112.700H124.700M114 117.600H121M114 121H121" stroke="#c6c6c6" stroke-width="1.300" fill="none"/><path d="M137.3 111.5L141.55 116.6L145.8 111.5" stroke="#f0f0f0" stroke-width="2.1" fill="none"/><path d="M120.500 142.200l4.300 4.300-6 6-4.300-4.300z" stroke="#c6c6c6" stroke-width="1.400" fill="none"/><path d="M102.500 153.300L113.300 148.200L118.700 153.600L112.300 162.800Z" stroke="#c6c6c6" stroke-width="1.400" fill="none"/><path d="M104.800 155.500L116.500 156.800L112.300 162.800Z" fill="#8d8d8d"/><path d="M149.7 188.5V180.7H157.5M153 184L160 191M160.3 185V191.3H154" stroke="#dcdcdc" stroke-width="1.4" fill="none"/><path d="M348.6 85.2L352.20 89.4L355.8 85.2" stroke="#858585" stroke-width="1.5" fill="none"/><path d="M415.6 85.2L419.20 89.4L422.8 85.2" stroke="#858585" stroke-width="1.5" fill="none"/><path d="M455.500 81.200l3-3.600 3 3.600" stroke="#b2b2b2" stroke-width="1.400" fill="none"/><path d="M493.800 77.500l3 3.600 3-3.600" stroke="#b2b2b2" stroke-width="1.400" fill="none"/><path d="M299.2 133.2L303.00 137.5L306.8 133.2" stroke="#646464" stroke-width="1.5" fill="none"/><rect x="328.800" y="123.800" width="21.600" height="21.200" stroke="#b2b2b2" stroke-width="1.600" fill="none"/><path d="M339.600 123.800V145M328.800 134.400H350.400" stroke="#b2b2b2" stroke-width="1.600"/><path d="M364.5 133.2L368.10 137.5L371.7 133.2" stroke="#646464" stroke-width="1.5" fill="none"/><path d="M397.200 133.200L405.600 125.800L412.600 132.900L403.800 140.700Z" stroke="#b2b2b2" stroke-width="1.400" fill="none" stroke-linejoin="round"/><path d="M404.700 127.600V124.800a1.500 1.500 0 0 1 3 0V130.300" stroke="#b2b2b2" stroke-width="1.300" fill="none"/><path d="M410.600 128.700q3.800 2.300 3.600 8.300" stroke="#b2b2b2" stroke-width="2" fill="none"/><rect x="393" y="141.600" width="24" height="5.400" fill="#6a6a6a"/><path d="M429.9 133.2L433.60 137.5L437.3 133.2" stroke="#646464" stroke-width="1.5" fill="none"/><rect x="454" y="141.600" width="24" height="5.400" fill="#6a6a6a"/><path d="M490.5 133.2L494.40 137.5L498.3 133.2" stroke="#646464" stroke-width="1.5" fill="none"/><path d="M500.7 188.5V180.7H508.5M504 184L511 191M511.3 185V191.3H505" stroke="#646464" stroke-width="1.4" fill="none"/><path d="M537 75.6H559" stroke="#b2b2b2" stroke-width="1.5"/><path d="M540.5 81.6H555.5" stroke="#b2b2b2" stroke-width="1.5"/><path d="M537 87.6H559" stroke="#b2b2b2" stroke-width="1.5"/><path d="M576 80H598" stroke="#b2b2b2" stroke-width="1.5"/><path d="M579.5 86H594.5" stroke="#b2b2b2" stroke-width="1.5"/><path d="M576 92H598" stroke="#b2b2b2" stroke-width="1.5"/><path d="M615.4 86H637" stroke="#b2b2b2" stroke-width="1.5"/><path d="M618.9 92H633.5" stroke="#b2b2b2" stroke-width="1.5"/><path d="M615.4 98H637" stroke="#b2b2b2" stroke-width="1.5"/><path d="M537 125H559" stroke="#b2b2b2" stroke-width="1.5"/><path d="M537 131H552" stroke="#b2b2b2" stroke-width="1.5"/><path d="M537 137H559" stroke="#b2b2b2" stroke-width="1.5"/><path d="M537 143H552" stroke="#b2b2b2" stroke-width="1.5"/><path d="M576 125H598" stroke="#b2b2b2" stroke-width="1.5"/><path d="M580 131H594" stroke="#b2b2b2" stroke-width="1.5"/><path d="M576 137H598" stroke="#b2b2b2" stroke-width="1.5"/><path d="M580 143H594" stroke="#b2b2b2" stroke-width="1.5"/><path d="M615.4 125H637" stroke="#b2b2b2" stroke-width="1.5"/><path d="M622 131H637" stroke="#b2b2b2" stroke-width="1.5"/><path d="M615.4 137H637" stroke="#b2b2b2" stroke-width="1.5"/><path d="M622 143H637" stroke="#b2b2b2" stroke-width="1.5"/><path d="M654 125H676" stroke="#b2b2b2" stroke-width="1.5"/><path d="M654 143H676" stroke="#b2b2b2" stroke-width="1.5"/><path d="M667 131H676" stroke="#b2b2b2" stroke-width="1.5"/><path d="M667 137.4H676" stroke="#b2b2b2" stroke-width="1.5"/><path d="M663.500 134.200H655M658.500 130.500L654.800 134.200L658.500 137.900" stroke="#b2b2b2" stroke-width="1.500" fill="none"/><path d="M693 125H715" stroke="#b2b2b2" stroke-width="1.5"/><path d="M693 143H715" stroke="#b2b2b2" stroke-width="1.5"/><path d="M706 131H715" stroke="#b2b2b2" stroke-width="1.5"/><path d="M706 137.4H715" stroke="#b2b2b2" stroke-width="1.5"/><path d="M693.500 134.200H702M698.500 130.500L702.200 134.200L698.500 137.900" stroke="#b2b2b2" stroke-width="1.500" fill="none"/><path d="M661 97.300L676.700 81.600M669.500 81.300H677V88.800" stroke="#b2b2b2" stroke-width="1.500" fill="none"/><text x="0" y="0" transform="translate(656.200,91.800) rotate(-47)" font-family="Liberation Sans" font-size="15.500" fill="#b2b2b2">ab</text><path d="M686.7 85.2L690.50 89.3L694.3 85.2" stroke="#646464" stroke-width="1.5" fill="none"/><text x="750.300" y="86.300" font-family="Liberation Sans" font-size="15.800" fill="#b2b2b2">ab</text><text x="750.500" y="97.400" font-family="Liberation Sans" font-size="15.800" fill="#b2b2b2">c</text><path d="M769.500 87.500q2.500 6-3 6.300H760M763.800 90L760 93.800L763.800 97.600" stroke="#b2b2b2" stroke-width="1.500" fill="none"/><rect x="747.800" y="123.800" width="21.600" height="21.600" stroke="#b2b2b2" stroke-width="1.500" fill="none"/><path d="M747.800 129.200H769.400M747.800 140H769.400M758.600 123.800V129.200M758.600 140V145.400" stroke="#b2b2b2" stroke-width="1.400"/><path d="M751.300 134.600H766M754.500 131.500L751.300 134.600L754.500 137.700M762.800 131.500L766 134.600L762.800 137.700" stroke="#b2b2b2" stroke-width="1.400" fill="none"/><path d="M783.3000000000001 133.2L787.10 137.5L790.9 133.2" stroke="#646464" stroke-width="1.5" fill="none"/><path d="M795.7 188.5V180.7H803.5M799 184L806 191M806.3 185V191.3H800" stroke="#646464" stroke-width="1.4" fill="none"/><path d="M1030.4 85.6L1034.10 89.8L1037.8 85.6" stroke="#858585" stroke-width="1.5" fill="none"/><rect x="831.700" y="127.700" width="21.300" height="13.300" stroke="#b2b2b2" stroke-width="1.400" fill="none"/><path d="M835 131H838M835 137.800H838M846.500 131H849.800" stroke="#b2b2b2" stroke-width="1.200"/><circle cx="842.300" cy="134.400" r="2.600" stroke="#b2b2b2" stroke-width="1.200" fill="none"/><path d="M843.800 136.800V144.600a5.600 2.300 0 0 0 11.200 0V136.800" fill="#292929" stroke="#b2b2b2" stroke-width="1.400"/><ellipse cx="849.400" cy="136.800" rx="5.600" ry="2.300" fill="#292929" stroke="#b2b2b2" stroke-width="1.400"/><path d="M843.800 140.700a5.600 2.300 0 0 0 11.200 0" fill="none" stroke="#b2b2b2" stroke-width="1.300"/><path d="M867.3000000000001 133.2L871.10 137.5L874.9 133.2" stroke="#646464" stroke-width="1.5" fill="none"/><path d="M949 131.800a5.300 5.300 0 1 0-6.600 5.200c-.3 2.800-1.700 4.900-4 6.500l.8 1c5.500-2.400 9.800-6.800 9.800-12.700z" fill="#b2b2b2"/><path d="M984.500 130.200H975M978.800 126.500L975 130.200L978.800 133.900" stroke="#b2b2b2" stroke-width="1.400" fill="none"/><path d="M1013.500 140.600H1023M1019.200 136.900L1023 140.600L1019.200 144.300" stroke="#b2b2b2" stroke-width="1.400" fill="none"/><path d="M1037.7 188.5V180.7H1045.5M1041 184L1048 191M1048.3 185V191.3H1042" stroke="#646464" stroke-width="1.4" fill="none"/><rect x="1111" y="70" width="17" height="9" fill="#5e5e5e"/><rect x="1111" y="80.500" width="11" height="9" fill="#5e5e5e"/><rect x="1111" y="91" width="20.500" height="9.500" fill="#5e5e5e"/><rect x="1102.700" y="69.100" width="40.600" height="32" stroke="#848484" stroke-width="1.500" fill="none"/><path d="M1109.800 69.100V101.100M1135.800 69.100V101.100M1128.500 69.100V79.700M1131.500 90.300V101.100M1102.700 79.700H1143.300M1102.700 90.300H1143.300M1122.500 79.700V90.300" stroke="#848484" stroke-width="1.400" fill="none"/><rect x="1219" y="80" width="12.500" height="10" fill="#5e5e5e"/><rect x="1232" y="80" width="13" height="21" fill="#5e5e5e"/><rect x="1204.700" y="69.100" width="40.600" height="32" stroke="#848484" stroke-width="1.500" fill="none"/><path d="M1218.400 69.100V101.100M1231.700 69.100V101.100M1204.700 79.700H1245.300M1204.700 90.300H1245.300" stroke="#848484" stroke-width="1.400" fill="none"/><g transform="translate(0,0)"><path d="M1249.300 78.400c1.900 1.500.2 4.900-3.600 9.500l-12 13.400-4.300-3.700 12.300-13.200c4-4.400 6.200-7 7.600-6z" fill="#292929" stroke="#848484" stroke-width="1.400"/><path d="M1229.500 97.500l4.500 3.900c-.6 5-7.200 7.800-18.700 6.500 4.400-1.400 6.100-3.200 7.100-5.800.9-2.600 3.700-4.800 7.100-4.600z" fill="#5e5e5e" stroke="#848484" stroke-width="1.400"/></g><rect x="1293" y="77" width="21" height="16.500" fill="#5e5e5e"/><rect x="1284.700" y="69.100" width="40.600" height="32" stroke="#848484" stroke-width="1.500" fill="none"/><path d="M1292 69.100V101.100M1284.700 75.500H1325.300M1318.500 69.100V75.500M1284.700 94.500H1292" stroke="#848484" stroke-width="1.400" fill="none"/><g transform="translate(80.3,0)"><path d="M1249.300 78.400c1.900 1.500.2 4.900-3.600 9.500l-12 13.400-4.300-3.700 12.300-13.200c4-4.400 6.200-7 7.600-6z" fill="#292929" stroke="#848484" stroke-width="1.400"/><path d="M1229.500 97.500l4.500 3.900c-.6 5-7.200 7.800-18.700 6.500 4.400-1.400 6.100-3.200 7.100-5.800.9-2.600 3.700-4.800 7.100-4.600z" fill="#5e5e5e" stroke="#848484" stroke-width="1.400"/></g><path d="M1165.3 144.3L1168.30 148.5L1171.3 144.3" stroke="#646464" stroke-width="1.5" fill="none"/><path d="M1243.5 144.3L1246.70 148.5L1249.8999999999999 144.3" stroke="#646464" stroke-width="1.5" fill="none"/><path d="M1326.5 144.3L1329.70 148.5L1332.8999999999999 144.3" stroke="#646464" stroke-width="1.5" fill="none"/><rect x="1381.500" y="71.300" width="11" height="7.800" fill="#636363"/><rect x="1370.2" y="65.300" width="23.6" height="20" stroke="#848484" stroke-width="1.500" fill="none"/><path d="M1370.2 70.300H1393.8M1370.2 80.300H1393.8M1377.700 65.300V70.300M1377.700 80.300V85.300M1385.600 65.300V85.300" stroke="#848484" stroke-width="1.300" fill="none"/><path d="M1382 74.700H1371M1375 70.700L1371 74.700L1375 78.700" stroke="#8e8e8e" stroke-width="1.600" fill="none"/><rect x="1375.300" y="110.200" width="7.500" height="7.500" fill="#636363" stroke="#848484" stroke-width="1.200"/><path d="M1393.8 108.900H1370.2V103.800H1393.8M1393.8 119.400H1370.2V124.600H1393.8M1377.700 103.800V108.900M1385.600 103.800V108.900M1377.700 119.400V124.600M1385.600 119.400V124.600M1371.800 108.900V119.400M1393.8 103.800V106M1393.8 122.500V124.600" stroke="#848484" stroke-width="1.400" fill="none"/><path d="M1385.500 110.300L1393.200 117.600M1393.200 110.300L1385.500 117.600" stroke="#8e8e8e" stroke-width="1.600" fill="none"/><rect x="1377.600" y="151.600" width="9.900" height="6.600" fill="#636363"/><rect x="1370.2" y="145.300" width="23.6" height="19" stroke="#848484" stroke-width="1.500" fill="none"/><path d="M1370.2 151H1393.8M1370.2 158.700H1393.8M1376.500 145.300V164.300M1388.200 145.300V164.300" stroke="#848484" stroke-width="1.300" fill="none"/><path d="M1374.200 141.300V145M1389.300 141.300V145M1374.200 143H1389.300" stroke="#848484" stroke-width="1.300" fill="none"/><path d="M1463.7 72.3L1467.35 76.8L1471.0 72.3" stroke="#646464" stroke-width="1.5" fill="none"/><path d="M1469.9 111L1473.50 115.5L1477.1 111" stroke="#646464" stroke-width="1.5" fill="none"/><path d="M1464.2 149.5L1467.75 154.0L1471.3 149.5" stroke="#646464" stroke-width="1.5" fill="none"/><path d="M1538 69.500V65.200H1520.500L1530.300 75L1520.500 84.800H1538V80.500" stroke="#d6d6d6" stroke-width="1.700" fill="none"/><path d="M1553 72.9L1557.40 78L1561.8 72.9" stroke="#f0f0f0" stroke-width="2.1" fill="none"/><rect x="1517.600" y="103.600" width="22.800" height="20.400" stroke="#b2b2b2" stroke-width="1.500" fill="none"/><path d="M1517.600 106.800H1540.400" stroke="#b2b2b2" stroke-width="1.500"/><path d="M1529 110V120M1524.800 116L1529 120.200L1533.200 116" stroke="#b2b2b2" stroke-width="1.500" fill="none"/><path d="M1550.6000000000001 111.2L1554.30 115.5L1558.0 111.2" stroke="#646464" stroke-width="1.5" fill="none"/><path d="M1518.200 156.200L1533.300 142L1540 149.300L1524.800 163.800Z" stroke="#d683de" stroke-width="1.500" fill="none" stroke-linejoin="round"/><path d="M1518.200 156.200L1524 150.800L1530.500 158.300L1524.800 163.800Z" fill="#c04fcb" stroke="#d683de" stroke-width="1.500" stroke-linejoin="round"/><path d="M1550 150.9L1554.30 156.2L1558.6 150.9" stroke="#f0f0f0" stroke-width="2.1" fill="none"/><path d="M1602 75H1626L1617.200 86V97.500H1610.800V86Z" stroke="#848484" stroke-width="1.500" fill="none" stroke-linejoin="round"/><path d="M1621.2 145L1625.00 149.5L1628.8 145" stroke="#646464" stroke-width="1.5" fill="none"/><circle cx="1679.200" cy="79.800" r="15" stroke="#dcdcdc" stroke-width="1.700" fill="none"/><path d="M1668.600 90.500L1652 107.300" stroke="#dcdcdc" stroke-width="1.700"/><path d="M1694.3 145L1698.60 150.1L1702.9 145" stroke="#f0f0f0" stroke-width="2.1" fill="none"/></svg>
<span class="t" style="left:459.76px;top:120px;font-size:22.5px;line-height:25px;color:#b2b2b2;transform:scaleX(0.8715);">A</span>
<span class="t" style="left:892.06px;top:119px;font-size:28.5px;line-height:32px;color:#b2b2b2;transform:scaleX(0.9425);">%</span>
<span class="t" style="left:988.39px;top:120px;font-size:14px;line-height:16px;color:#b2b2b2;transform:scaleX(1.1184);">0</span>
<span class="t" style="left:977.20px;top:133px;font-size:14px;line-height:16px;color:#b2b2b2;transform:scaleX(1.0196);">.00</span>
<span class="t" style="left:1016.20px;top:120px;font-size:14px;line-height:16px;color:#b2b2b2;transform:scaleX(1.0196);">.00</span>
<span class="t" style="left:1023.08px;top:133px;font-size:14px;line-height:16px;color:#b2b2b2;transform:scaleX(1.1145);">.0</span>
<span class="t" style="left:1584.76px;top:60px;font-size:24px;line-height:27px;color:#848484;transform:scaleX(0.8484);">A</span>
<span class="t" style="left:1583.53px;top:81px;font-size:26.5px;line-height:30px;color:#848484;transform:scaleX(0.9417);">Z</span>
</div></body></html>
